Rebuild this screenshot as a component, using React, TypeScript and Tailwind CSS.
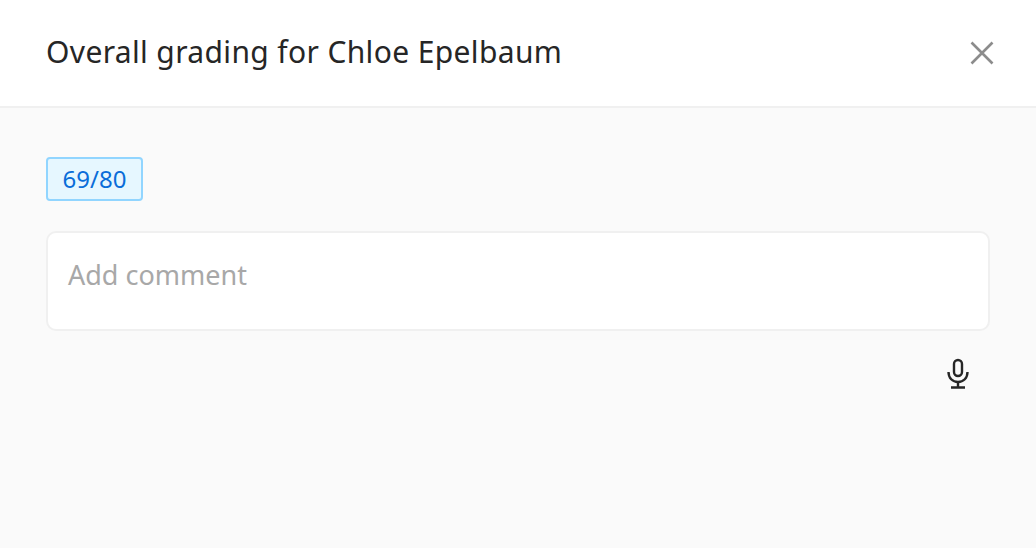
export default function App() {
  return (
    <main className="h-[548px] w-full bg-[#fafafa] font-['Noto_Sans',sans-serif]">
      <div className="flex h-[108px] items-center justify-between border-b-2 border-[#f0f0f0] bg-white pl-[46px] pr-[40px]">
        <h1 className="mb-[2px] text-[30px] leading-none tracking-[0.36px] text-[#262626]">
          Overall grading for Chloe Epelbaum
        </h1>
        <svg width="28" height="28" viewBox="0 0 28 28" fill="none" stroke="#8c8c8c" strokeWidth="2.6">
          <path d="M3.5 3.5 L24.5 24.5 M24.5 3.5 L3.5 24.5" />
        </svg>
      </div>

      <div className="px-[46px] pt-[49px]">
        <div className="flex h-[44px] w-[97px] items-center justify-center rounded-[4px] border-2 border-[#91d5ff] bg-[#e6f7ff] text-[24px] text-[#096dd9]">
          69/80
        </div>

        <div className="mt-[30px] flex h-[100px] w-[944px] rounded-[10px] border-2 border-[#f0f0f0] bg-white px-[20px] pt-[25px] text-[27px] leading-[34px] text-[#a8a8a8]">
          Add comment
        </div>

        <div className="mr-[16px] mt-[27px] flex w-[928px] justify-end">
          <svg width="32" height="32" viewBox="0 0 32 32" fill="none" stroke="#262626" strokeWidth="2.4">
            <rect x="12" y="2" width="8" height="16" rx="4" />
            <path d="M6.5 14 C6.5 20 10.5 24 16 24 C21.5 24 25.5 20 25.5 14" />
            <path d="M16 24 V29 M9 29.5 H23" />
          </svg>
        </div>
      </div>
    </main>
  );
}
